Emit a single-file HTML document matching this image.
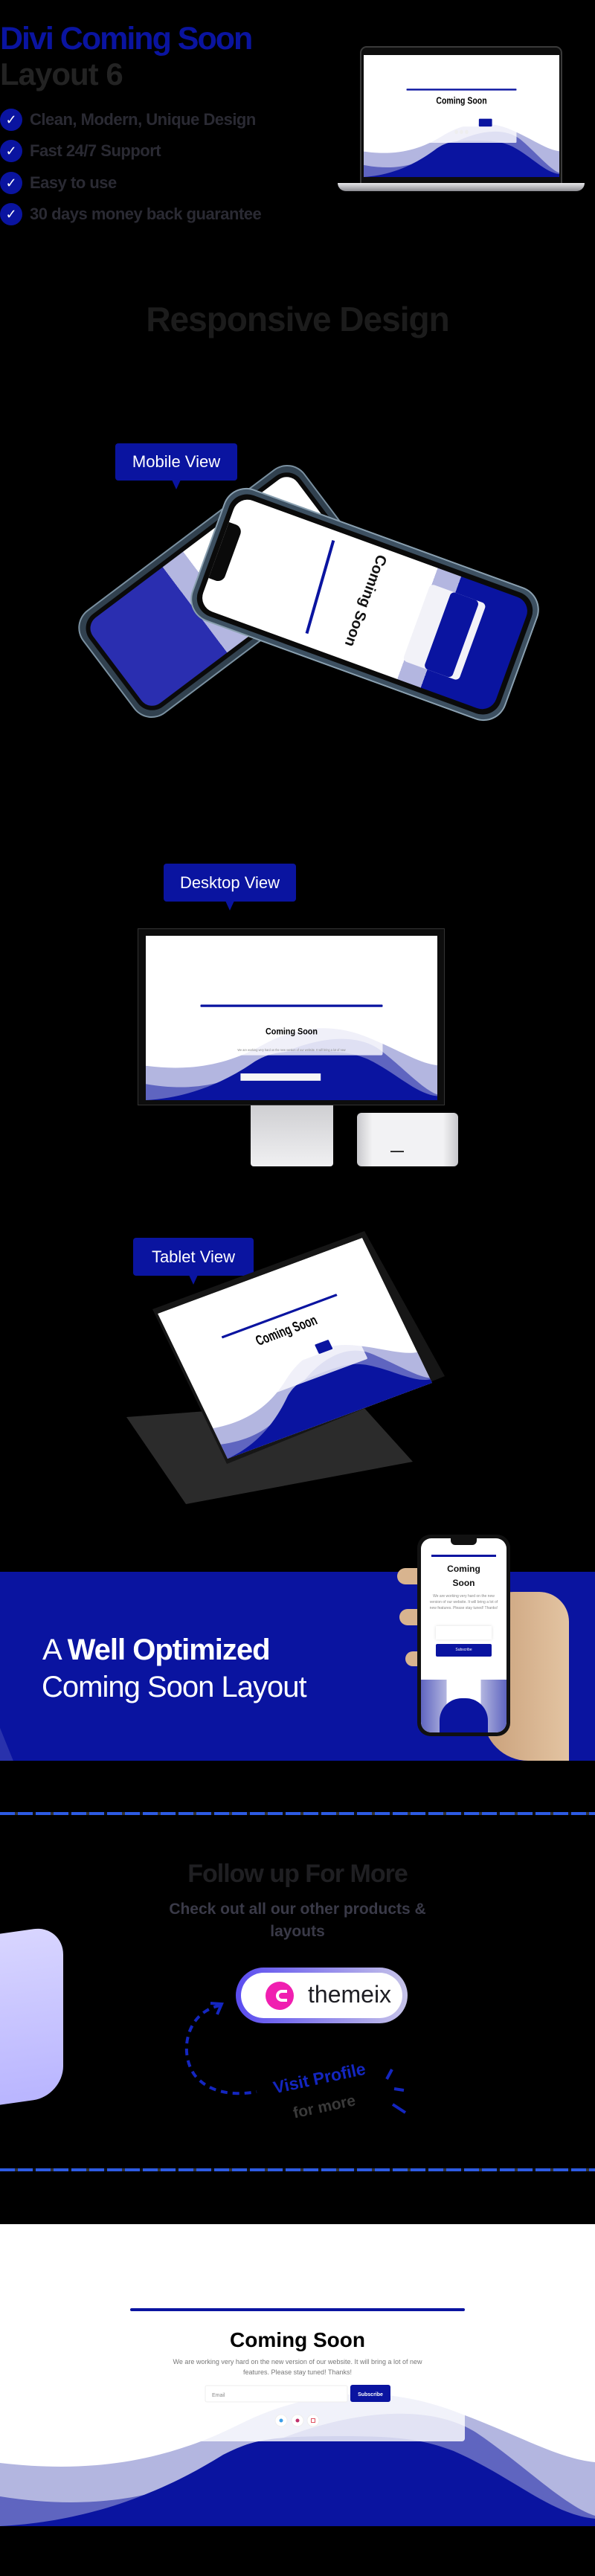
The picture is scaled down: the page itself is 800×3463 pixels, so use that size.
<!DOCTYPE html>
<html><head><meta charset="utf-8"><style>
*{margin:0;padding:0;box-sizing:border-box}
body{width:800px;height:3463px;background:#000;position:relative;overflow:hidden;font-family:"Liberation Sans",sans-serif}
.a{position:absolute}
.bub{position:absolute;background:#0a14a0;color:#fff;font-size:22px;border-radius:4px;display:flex;align-items:center;justify-content:center}
.bub:after{content:"";position:absolute;bottom:-12px;width:0;height:0;border-left:6px solid transparent;border-right:6px solid transparent;border-top:13px solid #0a14a0}
.chk{position:absolute;left:0;width:30px;height:30px;border-radius:50%;background:#0a14a0;color:#fff;font-size:18px;text-align:center;line-height:30px}
.li{position:absolute;left:40px;color:#2a2a33;font-size:22px;font-weight:bold;letter-spacing:-0.5px}
.dash{position:absolute;left:0;width:800px;height:4px;background:repeating-linear-gradient(90deg,#2d5be3 0 20px,#333 20px 24px,#2d5be3 24px 44px,#111 44px 48px)}
svg text{font-family:"Liberation Sans",sans-serif}
</style></head><body>

<div class="a" style="left:0;top:28px;font-size:43px;font-weight:bold;color:#0a14a0;letter-spacing:-2px">Divi Coming Soon</div>
<div class="a" style="left:0;top:76px;font-size:42px;font-weight:bold;color:#232323;letter-spacing:-1px">Layout 6</div>
<div class="chk" style="top:146px">✓</div><div class="li" style="top:148px">Clean, Modern, Unique Design</div>
<div class="chk" style="top:188px">✓</div><div class="li" style="top:190px">Fast 24/7 Support</div>
<div class="chk" style="top:231px">✓</div><div class="li" style="top:233px">Easy to use</div>
<div class="chk" style="top:273px">✓</div><div class="li" style="top:275px">30 days money back guarantee</div>

<div class="a" style="left:484px;top:62px;width:272px;height:186px;background:#0d0d0d;border:2px solid #3a3a3a;border-radius:9px 9px 0 0"></div>
<svg class="a" style="left:489px;top:74px" width="263" height="164" viewBox="0 0 800 406" preserveAspectRatio="none">
<rect width="800" height="406" fill="#fff"/>
<path d="M0,321 C120,335 220,320 320,270 C420,220 520,215 620,255 C700,285 750,315 800,320 L800,406 L0,406Z" fill="#b3b6e0"/>
<path d="M0,366 C120,385 220,370 310,320 C420,260 560,230 640,280 C700,320 760,380 800,392 L800,406 L0,406Z" fill="#5f65c0"/>
<path d="M0,406 C120,400 220,360 300,310 C340,290 360,285 460,285 C540,285 570,290 610,305 C690,340 740,390 800,396 L800,406Z" fill="#0a14a0"/>
<rect x="175" y="115" width="450" height="177" rx="4" fill="#fff" fill-opacity=".8"/>
<rect x="175" y="112" width="450" height="6" rx="2" fill="#0a14a0"/>
<text x="400" y="162" font-size="32" font-weight="bold" text-anchor="middle">Coming Soon</text>
<rect x="276" y="212" width="191" height="26" fill="#fff"/>
<rect x="471" y="212" width="54" height="26" rx="3" fill="#0a14a0"/>
<circle cx="379" cy="256" r="7" fill="#eee"/><circle cx="400" cy="256" r="7" fill="#eee"/><circle cx="421" cy="256" r="7" fill="#eee"/>
</svg>
<div class="a" style="left:454px;top:246px;width:332px;height:11px;background:linear-gradient(#e8e8ea,#8a8a90);border-radius:0 0 12px 12px"></div>

<div class="a" style="left:0;width:800px;top:402px;text-align:center;font-size:46px;font-weight:bold;color:#1c1c1c;letter-spacing:-1px">Responsive Design</div>

<div class="bub" style="left:155px;top:596px;width:164px;height:50px">Mobile View</div>
<div class="a" style="left:110px;top:710px;width:370px;height:170px;transform:rotate(-37deg);background:#31414f;border-radius:28px;padding:7px;box-shadow:0 0 0 2px #7a90a0">
 <div style="width:100%;height:100%;background:#0a0a0a;border-radius:24px;padding:6px">
  <div style="width:100%;height:100%;border-radius:18px;background:linear-gradient(90deg,#2a2eb0 0 38%,#b3b6e0 38% 48%,#fff 48%)"></div></div></div>
<div class="a" style="left:268px;top:720px;width:445px;height:185px;transform:rotate(20deg);background:#3d5061;border-radius:30px;padding:6px;box-shadow:0 0 0 2px #8aa0b0">
 <div style="width:100%;height:100%;background:#0a0a0a;border-radius:26px;padding:7px;position:relative">
  <div style="width:100%;height:100%;border-radius:20px;background:linear-gradient(90deg,#fff 0 68%,#b3b6e0 68% 76%,#0a14a0 76%)"></div>
  <div style="position:absolute;left:7px;top:45px;width:20px;height:80px;background:#0a0a0a;border-radius:0 10px 10px 0"></div>
  <div style="position:absolute;left:150px;top:20px;width:4px;height:130px;background:#0a14a0;transform:rotate(-4deg)"></div>
  <div style="position:absolute;left:150px;top:70px;font-size:20px;font-weight:bold;color:#111;transform:rotate(90deg)">Coming Soon</div>
  <div style="position:absolute;left:290px;top:30px;width:80px;height:110px;background:#f2f2f8;border-radius:6px"></div>
  <div style="position:absolute;left:320px;top:30px;width:40px;height:110px;background:#0a14a0;border-radius:6px"></div>
 </div></div>

<div class="bub" style="left:220px;top:1161px;width:178px;height:51px">Desktop View</div>
<div class="a" style="left:185px;top:1248px;width:413px;height:238px;background:#0d0d0d;border:1px solid #333"></div>
<svg class="a" style="left:196px;top:1258px" width="392" height="221" viewBox="0 0 800 406" preserveAspectRatio="none">
<rect width="800" height="406" fill="#fff"/>
<path d="M0,321 C120,335 220,320 320,270 C420,220 520,215 620,255 C700,285 750,315 800,320 L800,406 L0,406Z" fill="#b3b6e0"/>
<path d="M0,366 C120,385 220,370 310,320 C420,260 560,230 640,280 C700,320 760,380 800,392 L800,406 L0,406Z" fill="#5f65c0"/>
<path d="M0,406 C120,400 220,360 300,310 C340,290 360,285 460,285 C540,285 570,290 610,305 C690,340 740,390 800,396 L800,406Z" fill="#0a14a0"/>
<rect x="150" y="175" width="500" height="120" rx="4" fill="#fff" fill-opacity=".8"/>
<rect x="150" y="170" width="500" height="6" rx="2" fill="#0a14a0"/>
<text x="400" y="243" font-size="22" font-weight="bold" text-anchor="middle">Coming Soon</text>
<text x="400" y="285" font-size="8" fill="#888" text-anchor="middle">We are working very hard on the new version of our website. It will bring a lot of new</text>
<rect x="260" y="340" width="220" height="18" fill="#f6f6f6"/>
<rect x="483" y="340" width="60" height="18" rx="2" fill="#0a14a0"/>
</svg>
<div class="a" style="left:337px;top:1486px;width:111px;height:82px;background:linear-gradient(#cfcfd2,#f0f0f2);border-radius:0 0 4px 4px"></div>
<div class="a" style="left:480px;top:1496px;width:136px;height:72px;background:linear-gradient(90deg,#c8c8cc,#f2f2f4 15%,#f2f2f4 85%,#c8c8cc);border-radius:6px"></div>
<div class="a" style="left:525px;top:1547px;width:18px;height:2px;background:#333"></div>

<div class="bub" style="left:179px;top:1664px;width:162px;height:51px">Tablet View</div>
<svg class="a" style="left:0;top:0" width="800" height="2100">
<polygon points="170,1905 480,1882 555,1965 250,2022" fill="#2b2b2b"/>
<polygon points="205,1760 490,1655 598,1850 305,1968" fill="#161616"/>
</svg>
<div class="a" style="left:212px;top:1766px;width:400px;height:200px;transform-origin:0 0;transform:matrix(0.6875,-0.255,0.47,0.975,0,0)">
<svg width="400" height="200" viewBox="0 0 800 406" preserveAspectRatio="none" style="display:block">
<rect width="800" height="406" fill="#fff"/>
<path d="M0,321 C120,335 220,320 320,270 C420,220 520,215 620,255 C700,285 750,315 800,320 L800,406 L0,406Z" fill="#b3b6e0"/>
<path d="M0,366 C120,385 220,370 310,320 C420,260 560,230 640,280 C700,320 760,380 800,392 L800,406 L0,406Z" fill="#5f65c0"/>
<path d="M0,406 C120,400 220,360 300,310 C340,290 360,285 460,285 C540,285 570,290 610,305 C690,340 740,390 800,396 L800,406Z" fill="#0a14a0"/>
<rect x="175" y="115" width="450" height="177" rx="4" fill="#fff" fill-opacity=".8"/>
<rect x="175" y="110" width="450" height="6" rx="2" fill="#0a14a0"/>
<text x="400" y="165" font-size="36" font-weight="bold" text-anchor="middle">Coming Soon</text>
<rect x="276" y="212" width="191" height="26" fill="#fff"/>
<rect x="471" y="212" width="54" height="26" rx="3" fill="#0a14a0"/>
</svg></div>

<div class="a" style="left:0;top:2113px;width:800px;height:254px;background:#0a14a0;overflow:hidden">
<div class="a" style="left:-60px;top:60px;width:50px;height:260px;background:rgba(255,255,255,.13);transform:rotate(-22deg)"></div>
</div>
<div class="a" style="left:57px;top:2196px;font-size:40px;color:#fff;letter-spacing:-1px">A <b>Well Optimized</b></div>
<div class="a" style="left:56px;top:2246px;font-size:40px;color:#fff;letter-spacing:-1px">Coming Soon Layout</div>
<div class="a" style="left:650px;top:2140px;width:115px;height:227px;background:linear-gradient(90deg,#c9a07a,#e3c4a2);border-radius:40px 40px 0 60px"></div>
<div class="a" style="left:534px;top:2108px;width:40px;height:22px;background:#d8b48f;border-radius:11px"></div>
<div class="a" style="left:537px;top:2163px;width:40px;height:22px;background:#d8b48f;border-radius:11px"></div>
<div class="a" style="left:545px;top:2220px;width:35px;height:20px;background:#d8b48f;border-radius:10px"></div>
<div class="a" style="left:561px;top:2063px;width:125px;height:271px;background:#111;border-radius:18px;padding:5px">
 <div style="width:100%;height:100%;background:#fff;border-radius:14px;position:relative;overflow:hidden;text-align:center">
  <div style="position:absolute;left:40px;top:0;width:35px;height:9px;background:#111;border-radius:0 0 6px 6px"></div>
  <div style="position:absolute;left:14px;top:22px;width:87px;height:3px;background:#0a14a0"></div>
  <div style="position:absolute;left:0;width:100%;top:32px;font-size:12px;font-weight:bold;line-height:19px;color:#111">Coming<br>Soon</div>
  <div style="position:absolute;left:10px;width:95px;top:74px;font-size:5px;line-height:8px;color:#888">We are working very hard on the new version of our website. It will bring a lot of new features. Please stay tuned! Thanks!</div>
  <div style="position:absolute;left:20px;top:118px;width:75px;height:18px;background:#fff;box-shadow:0 0 4px #ddd"></div>
  <div style="position:absolute;left:20px;top:142px;width:75px;height:17px;background:#0a14a0;border-radius:2px;color:#fff;font-size:5px;line-height:17px">Subscribe</div>
  <div style="position:absolute;left:0;top:190px;width:115px;height:80px;background:linear-gradient(90deg,#5f65c0,#b3b6e0 30%,#fff 30%,#fff 70%,#b3b6e0 70%,#5f65c0)"></div>
  <div style="position:absolute;left:25px;top:215px;width:65px;height:60px;background:#0a14a0;border-radius:30px 30px 0 0"></div>
 </div></div>

<div class="dash" style="top:2436px"></div>
<div class="a" style="left:0;width:800px;top:2500px;text-align:center;font-size:34px;font-weight:bold;color:#1f1f22;letter-spacing:-1px">Follow up For More</div>
<div class="a" style="left:205px;width:390px;top:2552px;text-align:center;font-size:21px;font-weight:bold;line-height:30px;color:#3a3a48">Check out all our other products &amp; layouts</div>
<div class="a" style="left:-20px;top:2595px;width:105px;height:230px;background:linear-gradient(#d8d5ff,#b9b5ff);border-radius:0 40px 40px 0;transform:skewY(-8deg)"></div>
<div class="a" style="left:317px;top:2645px;width:231px;height:75px;border-radius:38px;background:linear-gradient(90deg,#5a4cf0,#c6c3e8);padding:7px">
 <div style="width:100%;height:100%;background:#fff;border-radius:32px;position:relative">
  <div style="position:absolute;left:33px;top:12px;width:38px;height:38px;border-radius:50%;background:#f01fb0"></div>
  <div style="position:absolute;left:47px;top:23px;width:15px;height:16px;border:4px solid #fff;border-right:none;border-radius:8px 0 0 8px"></div>
  <div style="position:absolute;left:90px;top:11px;font-size:32px;color:#1e1e24">themeix</div>
 </div></div>
<svg class="a" style="left:0;top:0" width="800" height="2900">
<path d="M296,2696 C250,2705 240,2760 262,2790 C280,2812 310,2818 345,2812" fill="none" stroke="#1426c0" stroke-width="4" stroke-dasharray="9 7"/>
<path d="M283,2693 L298,2694 L292,2708" fill="none" stroke="#1426c0" stroke-width="4"/>
<path d="M527,2782 L520,2795 M530,2808 L543,2810 M528,2829 L545,2840" stroke="#1426c0" stroke-width="4"/>
</svg>
<div class="a" style="left:365px;top:2794px;font-size:23px;font-weight:bold;color:#1426c0;transform:rotate(-12deg);transform-origin:0 0">Visit Profile</div>
<div class="a" style="left:392px;top:2830px;font-size:21px;font-weight:bold;color:#3a3a3a;transform:rotate(-12deg);transform-origin:0 0">for more</div>

<div class="dash" style="top:2915px"></div>

<svg class="a" style="left:0;top:2990px" width="800" height="406" viewBox="0 0 800 406">
<rect width="800" height="406" fill="#fff"/>
<path d="M0,321 C120,335 220,320 320,270 C420,220 520,215 620,255 C700,285 750,315 800,320 L800,406 L0,406Z" fill="#b3b6e0"/>
<path d="M0,366 C120,385 220,370 310,320 C420,260 560,230 640,280 C700,320 760,380 800,392 L800,406 L0,406Z" fill="#5f65c0"/>
<path d="M0,406 C120,400 220,360 300,310 C340,290 360,285 460,285 C540,285 570,290 610,305 C690,340 740,390 800,396 L800,406Z" fill="#0a14a0"/>
<rect x="175" y="115" width="450" height="177" rx="4" fill="#fff" fill-opacity=".82"/>
<rect x="175" y="113" width="450" height="4" rx="2" fill="#0a14a0"/>
<text x="400" y="165" font-size="28" font-weight="bold" text-anchor="middle" fill="#000">Coming Soon</text>
<text x="400" y="188" font-size="9" fill="#777" text-anchor="middle">We are working very hard on the new version of our website. It will bring a lot of new</text>
<text x="400" y="202" font-size="9" fill="#777" text-anchor="middle">features. Please stay tuned! Thanks!</text>
<rect x="276" y="217" width="191" height="22" rx="2" fill="#fff" stroke="#eee"/>
<text x="285" y="232" font-size="7" fill="#888">Email</text>
<rect x="471" y="216" width="54" height="23" rx="3" fill="#0a14a0"/>
<text x="498" y="231" font-size="7" font-weight="bold" fill="#fff" text-anchor="middle">Subscribe</text>
<circle cx="378" cy="264" r="8" fill="#fff" stroke="#eee"/><circle cx="400" cy="264" r="8" fill="#fff" stroke="#eee"/><circle cx="421" cy="264" r="8" fill="#fff" stroke="#eee"/>
<circle cx="378" cy="264" r="2.5" fill="#3b9ee8"/><circle cx="400" cy="264" r="2.5" fill="#c0306a"/><rect x="418.5" y="261.5" width="5" height="5" fill="none" stroke="#e05060"/>
</svg>
</body></html>
